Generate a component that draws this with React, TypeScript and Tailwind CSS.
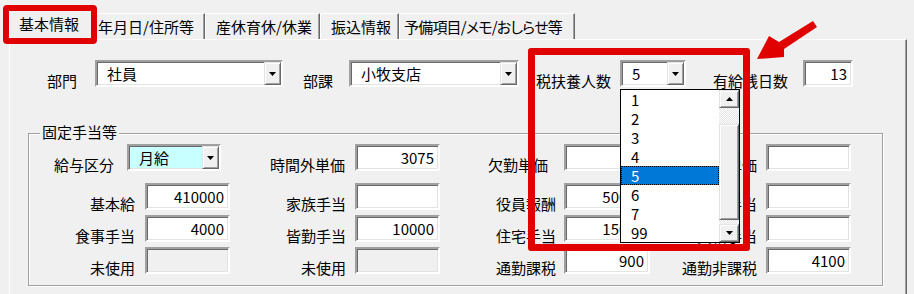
import React from "react";

const SUNKEN =
  "border-2 border-t-[#a0a0a0] border-l-[#a0a0a0] border-b-white border-r-white shadow-[inset_1px_1px_0_#696969,inset_-1px_-1px_0_#e3e3e3]";
const RAISED =
  "border border-t-[#e3e3e3] border-l-[#e3e3e3] border-b-[#696969] border-r-[#696969] shadow-[inset_1px_1px_0_#ffffff,inset_-1px_-1px_0_#a0a0a0] bg-[#f0f0f0]";
const HATCH =
  "bg-[repeating-conic-gradient(#ffffff_0_25%,#e3e3e3_0_50%)] bg-[length:2px_2px]";

function Tri({ up }: { up?: boolean }) {
  return (
    <svg width="7" height="4" viewBox="0 0 7 4" className="block">
      <polygon points={up ? "0,4 7,4 3.5,0" : "0,0 7,0 3.5,4"} fill="#000" />
    </svg>
  );
}

function Combo({
  value,
  className = "",
  bg = "bg-white",
}: {
  value: string;
  className?: string;
  bg?: string;
}) {
  return (
    <div className={`${SUNKEN} ${bg} ${className} h-[27px] flex items-stretch`}>
      <div className="flex-1 flex items-center pl-[10px] leading-[20px] whitespace-nowrap">
        {value}
      </div>
      <div className={`${RAISED} w-[17px] flex items-center justify-center`}>
        <Tri />
      </div>
    </div>
  );
}

function Input({
  value = "",
  className = "",
  disabled,
}: {
  value?: string;
  className?: string;
  disabled?: boolean;
}) {
  return (
    <div
      className={`${SUNKEN} ${
        disabled ? "bg-[#f0f0f0]" : "bg-white"
      } ${className} h-[27px] flex items-center justify-end pr-[4px] leading-[20px]`}
    >
      {value}
    </div>
  );
}

function Label({ text, className = "" }: { text: string; className?: string }) {
  return (
    <div className={`text-right whitespace-nowrap leading-[20px] mb-[-4px] ${className}`}>
      {text}
    </div>
  );
}

function DropList() {
  const items = ["1", "2", "3", "4", "5", "6", "7", "99"];
  return (
    <div className="absolute left-0 top-[29px] z-20 w-[120px] h-[154px] border border-black bg-white flex">
      <div className="w-[98px] flex flex-col">
        {items.map((it) => (
          <div
            key={it}
            className={`h-[19px] leading-[19px] pl-[10px] ${
              it === "5"
                ? "bg-[#0078d7] text-white outline-1 outline-dotted outline-black -outline-offset-1"
                : ""
            }`}
          >
            {it}
          </div>
        ))}
      </div>
      <div className="w-[20px] flex flex-col">
        <div className={`${RAISED} h-[18px] flex items-center justify-center`}>
          <Tri up />
        </div>
        <div className={`h-[16px] ${HATCH}`} />
        <div className={`${RAISED} h-[96px]`} />
        <div className={`h-[4px] ${HATCH}`} />
        <div className={`${RAISED} h-[18px] flex items-center justify-center`}>
          <Tri />
        </div>
      </div>
    </div>
  );
}

function Tab({
  text,
  className = "",
}: {
  text: string;
  className?: string;
}) {
  return (
    <div
      className={`h-[26px] border-t border-t-white border-r border-r-[#696969] shadow-[inset_-1px_0_0_#a0a0a0] pt-[3px] leading-[20px] whitespace-nowrap ${className}`}
    >
      {text}
    </div>
  );
}

export default function App() {
  return (
    <div className="relative w-[914px] h-[294px] overflow-hidden bg-[#f0f0f0] text-black text-[15px] leading-[20px] font-['Noto_Sans_CJK_JP',sans-serif]">
      {/* Tabs */}
      <div className="flex items-end h-[39px] pt-[10px] pl-[9px]">
        <div className="relative z-10 h-[31px] -mb-[2px] w-[85px] bg-[#f0f0f0] border-t border-l border-white border-r border-r-[#696969] pt-[3px] pl-[9px] whitespace-nowrap">
          基本情報
        </div>
        <Tab text="年月日/住所等" className="w-[111px] pl-[4px]" />
        <Tab text="産休育休/休業" className="w-[115px] pl-[10px] border-l border-l-white" />
        <Tab text="振込情報" className="w-[79px] pl-[10px] border-l border-l-white" />
        <Tab
          text="予備項目/メモ/おしらせ等"
          className="w-[176px] pl-[4px] border-l border-l-white tracking-[-0.8px] [font-feature-settings:'palt']"
        />
      </div>

      {/* Panel */}
      <div className="ml-[9px] w-[898px] h-[260px] border-t border-l border-t-white border-l-white border-r border-r-[#696969] shadow-[inset_-1px_0_0_#a0a0a0]">
        {/* Row 1 */}
        <div className="flex items-end mt-[20px] h-[27px]">
          <Label text="部門" className="w-[67px]" />
          <Combo value="社員" className="ml-[18px] w-[188px]" />
          <Label text="部課" className="w-[50px]" />
          <Combo value="小牧支店" className="ml-[16px] w-[170px]" />
          <Label text="税扶養人数" className="w-[92px]" />
          <div className="relative ml-[9px]">
            <Combo value="5" className="w-[66px]" />
            <DropList />
          </div>
          <Label text="有給残日数" className="w-[102px]" />
          <Input value="13" className="ml-[15px] w-[50px]" />
        </div>

        {/* Group box */}
        <div className="mt-[46px] ml-[18px] w-[855px] border border-[#a0a0a0] shadow-[inset_1px_1px_0_#ffffff,1px_1px_0_#ffffff] pb-[11px]">
          <div className="-mt-[12px] ml-[11px] px-[2px] w-fit bg-[#f0f0f0] leading-[20px]">
            固定手当等
          </div>

          {/* Row A */}
          <div className="flex items-end mt-[2px]">
            <Label text="給与区分" className="w-[85px]" />
            <Combo value="月給" bg="bg-[#c8ffff]" className="ml-[13px] w-[94px]" />
            <Label text="時間外単価" className="w-[124px]" />
            <Input value="3075" className="ml-[10px] w-[85px]" />
            <Label text="欠勤単価" className="w-[108px]" />
            <Input className="ml-[16px] w-[86px]" />
            <Label text="休出単価" className="w-[107px]" />
            <Input className="ml-[9px] w-[85px]" />
          </div>

          {/* Row B */}
          <div className="flex items-end mt-[12px]">
            <Label text="基本給" className="w-[106px]" />
            <Input value="410000" className="ml-[10px] w-[85px]" />
            <Label text="家族手当" className="w-[116px]" />
            <Input className="ml-[9px] w-[85px]" />
            <Label text="役員報酬" className="w-[116px]" />
            <Input value="50000" className="ml-[8px] w-[86px]" />
            <Label text="役職手当" className="w-[107px]" />
            <Input className="ml-[9px] w-[85px]" />
          </div>

          {/* Row C */}
          <div className="flex items-end mt-[5px]">
            <Label text="食事手当" className="w-[106px]" />
            <Input value="4000" className="ml-[10px] w-[85px]" />
            <Label text="皆勤手当" className="w-[116px]" />
            <Input value="10000" className="ml-[9px] w-[85px]" />
            <Label text="住宅手当" className="w-[116px]" />
            <Input value="15000" className="ml-[8px] w-[86px]" />
            <Label text="資格手当" className="w-[107px]" />
            <Input className="ml-[9px] w-[85px]" />
          </div>

          {/* Row D */}
          <div className="flex items-end mt-[5px]">
            <Label text="未使用" className="w-[106px]" />
            <Input disabled className="ml-[10px] w-[85px]" />
            <Label text="未使用" className="w-[116px]" />
            <Input disabled className="ml-[9px] w-[85px]" />
            <Label text="通勤課税" className="w-[116px]" />
            <Input value="900" className="ml-[8px] w-[86px]" />
            <Label text="通勤非課税" className="w-[107px]" />
            <Input value="4100" className="ml-[9px] w-[85px]" />
          </div>
        </div>
      </div>

      {/* Annotation overlays */}
      <div className="absolute z-30 left-[3px] top-[5px] w-[94px] h-[39px] border-[6px] border-[#e00000] rounded-[4px]" />
      <div className="absolute z-30 left-[528px] top-[48px] w-[222px] h-[203px] border-[7px] border-[#e00000] rounded-[3px]" />
      <svg
        className="absolute z-30 left-[750px] top-[15px]"
        width="75"
        height="50"
        viewBox="0 0 75 50"
      >
        <polygon
          points="7,44 19,21 29,27 63,6 67,12 34,34 34,42"
          fill="#e00000"
        />
      </svg>
    </div>
  );
}
